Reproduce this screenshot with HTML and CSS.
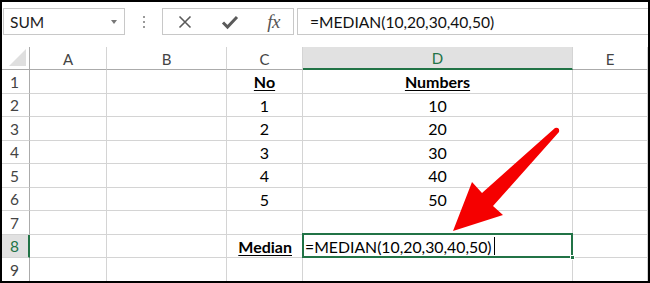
FILE: index.html
```html
<!DOCTYPE html>
<html>
<head>
<meta charset="utf-8">
<link rel="stylesheet" href="styles.css">
</head>
<body>
<div class="frame">
  <div class="fbar">
    <div class="namebox"><span class="nb-text">SUM</span><span class="nb-arrow"></span></div>
    <div class="dots"><i></i><i></i><i></i></div>
    <div class="btnbox">
      <svg class="ico" width="16" height="16" viewBox="0 0 16 16"><path d="M2.5 2.5 L13.5 13.5 M13.5 2.5 L2.5 13.5" stroke="#5a5a5a" stroke-width="1.6" fill="none"/></svg>
      <svg class="ico" width="18" height="16" viewBox="0 0 18 16"><path d="M2 8.5 L6.5 13 L16 3" stroke="#5a5a5a" stroke-width="3" fill="none" stroke-linejoin="miter"/></svg>
      <span class="fx">fx</span>
    </div>
    <div class="formula">=MEDIAN(10,20,30,40,50)</div>
  </div>
  <div class="sheet">
    <div class="grid">
      <div class="corner"><span class="tri"></span></div>
      <div class="ch">A</div><div class="ch">B</div><div class="ch">C</div><div class="ch sel">D</div><div class="ch">E</div>

      <div class="rh">1</div><div class="c"></div><div class="c"></div><div class="c ctr b">No</div><div class="c ctr b">Numbers</div><div class="c"></div>
      <div class="rh">2</div><div class="c"></div><div class="c"></div><div class="c ctr">1</div><div class="c ctr">10</div><div class="c"></div>
      <div class="rh">3</div><div class="c"></div><div class="c"></div><div class="c ctr">2</div><div class="c ctr">20</div><div class="c"></div>
      <div class="rh">4</div><div class="c"></div><div class="c"></div><div class="c ctr">3</div><div class="c ctr">30</div><div class="c"></div>
      <div class="rh">5</div><div class="c"></div><div class="c"></div><div class="c ctr">4</div><div class="c ctr">40</div><div class="c"></div>
      <div class="rh">6</div><div class="c"></div><div class="c"></div><div class="c ctr">5</div><div class="c ctr">50</div><div class="c"></div>
      <div class="rh">7</div><div class="c"></div><div class="c"></div><div class="c"></div><div class="c"></div><div class="c"></div>
      <div class="rh sel">8</div><div class="c"></div><div class="c"></div><div class="c rt b">Median</div><div class="c active"><span class="edit">=MEDIAN(10,20,30,40,50)</span><span class="caret"></span><span class="handle"></span></div><div class="c"></div>
      <div class="rh">9</div><div class="c"></div><div class="c"></div><div class="c"></div><div class="c"></div><div class="c"></div>
    </div>
    <svg class="arrow" width="650" height="283" viewBox="0 0 650 283">
      <path d="M453 234 L472 185 L482 196 L555 131 Q560 130 559 135 L493 209 L503 218 Z" fill="#f50000"/>
    </svg>
  </div>
</div>
</body>
</html>
```
FILE: styles.css
```css
* { box-sizing: border-box; }
html, body { margin: 0; padding: 0; background: #fff; }
body { font-family: Lato, "Open Sans", sans-serif; }
.frame {
  width: 650px; height: 283px;
  border: 2px solid #000;
  overflow: hidden;
  position: relative;
  background: #fff;
}
.fbar {
  display: flex;
  align-items: stretch;
  height: 27px;
  margin: 6px 0 0 1px;
}
.namebox {
  width: 122px;
  border: 1px solid #c8c8c8;
  display: flex; align-items: center; justify-content: space-between;
  padding: 0 7px 0 6px;
  font-size: 15.5px; color: #222;
}
.nb-arrow {
  width: 0; height: 0;
  border-left: 3.5px solid transparent; border-right: 3.5px solid transparent;
  border-top: 4px solid #777;
  margin-top: 1px;
}
.dots {
  width: 37px;
  display: flex; flex-direction: column; align-items: center; justify-content: center; gap: 3px;
}
.dots i { width: 2px; height: 2px; background: #9a9a9a; display: block; }
.btnbox {
  width: 132px;
  border: 1px solid #c8c8c8;
  display: flex; align-items: center; justify-content: space-between;
  padding: 0 13px 0 14px;
}
.ico { display: block; }
.fx {
  font-family: "Liberation Serif", "DejaVu Serif", serif;
  font-style: italic; font-size: 19px; color: #555;
  letter-spacing: -0.5px;
}
.formula {
  flex: 1;
  margin-left: 3px;
  border: 1px solid #c8c8c8;
  border-right: none;
  display: flex; align-items: center;
  padding-left: 12px;
  font-size: 15.6px; color: #111;
}
.sheet { position: relative; margin-top: 12px; margin-left: 0; }
.grid {
  display: grid;
  grid-template-columns: 28px 77px 120px 76px 270px 75px;
  grid-template-rows: 23px 24px 23px 24px 23px 24px 23px 24px 23px 24px;
}
.corner {
  border-right: 1px solid #ababab; border-bottom: 1px solid #ababab;
  position: relative; background: #fff;
}
.tri {
  position: absolute; right: 3px; bottom: 3px;
  width: 0; height: 0;
  border-left: 17px solid transparent;
  border-bottom: 17px solid #dfdfdf;
}
.ch {
  border-right: 1px solid #d4d4d4; border-bottom: 1px solid #ababab;
  display: flex; align-items: center; justify-content: center;
  font-size: 15px; color: #444; padding-top: 1px;
}
.ch.sel { background: #e1e1e1; border-bottom: 2px solid #217346; color: #217346; }
.rh {
  border-right: 1px solid #ababab; border-bottom: 1px solid #d4d4d4;
  display: flex; align-items: center;
  padding-left: 8px;
  font-size: 15.5px; color: #444;
}
.rh.sel { background: #e1e1e1; border-right: 2px solid #217346; color: #217346; }
.c {
  border-right: 1px solid #d4d4d4; border-bottom: 1px solid #d4d4d4;
  display: flex; align-items: center;
  font-size: 16px; color: #000;
  white-space: nowrap;
}
.ctr { justify-content: center; }
.rt { justify-content: flex-end; padding-right: 10px; }
.b { font-weight: bold; text-decoration: underline; text-underline-offset: 2px; }
.active { position: relative; overflow: visible; }
.active::after {
  content: ""; position: absolute;
  left: -1px; top: -2px; right: -1px; bottom: -1px;
  border: 2px solid #217346;
}
.edit { font-size: 15.8px; padding-left: 2px; color: #000; }
.caret { width: 1px; height: 18px; background: #000; margin-left: 2px; }
.handle {
  position: absolute; right: -3px; bottom: -3px;
  width: 5px; height: 5px; background: #217346; border: 1px solid #fff;
  z-index: 2;
}
.arrow { position: absolute; left: -2px; top: -50px; pointer-events: none; }
```
